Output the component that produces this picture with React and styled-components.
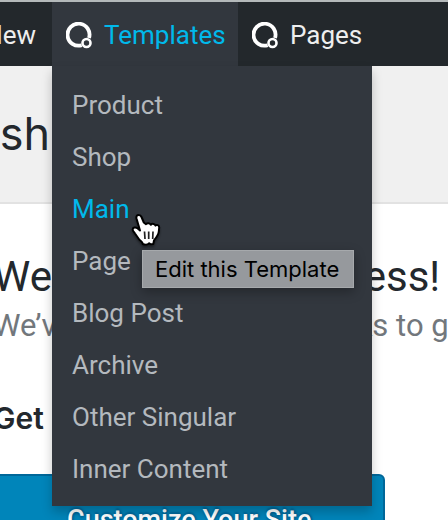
import React from "react";
import styled, { createGlobalStyle, css } from "styled-components";

const GlobalStyle = createGlobalStyle`
  *, *::before, *::after { box-sizing: border-box; }
  body {
    margin: 0;
    background: #fff;
    color: #23282d;
    font-family: Roboto, "Liberation Sans", sans-serif;
    overflow: hidden;
  }
  h1, h2, h3, p, ul { margin: 0; padding: 0; }
  ul { list-style: none; }
`;

const Page = styled.div`
  height: 100vh;
  overflow: hidden;
`;

const AdminBar = styled.nav`
  position: relative;
  z-index: 2;
  display: flex;
  height: 66px;
  border-top: 2px solid #b4b9ba;
  background: #23282c;
`;

const BarItem = styled.div`
  position: relative;
  display: flex;
  flex: none;
  width: ${({ $clipped }) => ($clipped ? "52px" : "186px")};
  justify-content: ${({ $clipped }) => ($clipped ? "flex-end" : "flex-start")};
  background: ${({ $open }) => ($open ? "#32373e" : "transparent")};
`;

const BarLink = styled.a`
  display: flex;
  align-items: center;
  gap: 12px;
  padding: 2px 16px 0 14px;
  color: ${({ $open }) => ($open ? "#00b9eb" : "#eee")};
  font-size: 26px;
  line-height: 32px;
  text-decoration: none;
  white-space: nowrap;
`;

const Menu = styled.ul`
  position: absolute;
  top: 100%;
  left: 0;
  width: 320px;
  padding: 13px 0 11px;
  background: #32373e;
  box-shadow: 0 6px 10px rgba(0, 0, 0, 0.22);
`;

const MenuItem = styled.li`
  position: relative;
`;

const MenuLink = styled.a`
  display: block;
  padding: 0 20px;
  color: ${({ $active }) => ($active ? "#00b9eb" : "#b4b9be")};
  font-size: 26px;
  line-height: 52px;
  text-decoration: none;
  white-space: nowrap;
`;

const overMenu = css`
  position: absolute;
  z-index: 1;
  pointer-events: none;
`;

const Tooltip = styled.span`
  ${overMenu}
  top: 67px;
  left: 90px;
  padding: 0 14px 0 12px;
  border: 1px solid #a6a9ac;
  background: #96999d;
  box-shadow: 0 4px 12px rgba(0, 0, 0, 0.3);
  color: #000;
  font-family: Inter, "Liberation Sans", sans-serif;
  font-size: 22px;
  line-height: 36px;
  white-space: nowrap;
`;

const Pointer = styled.svg`
  ${overMenu}
  top: 30px;
  left: 78px;
  filter: drop-shadow(0 2px 1px rgba(0, 0, 0, 0.4));
`;

const ScreenHeader = styled.header`
  height: 138px;
  padding: 42px 0;
  border-bottom: 2px solid #e2e2e2;
  background: #f0f0f0;
`;

const ScreenTitle = styled.h1`
  margin-left: -58px;
  font-family: Inter, "Liberation Sans", sans-serif;
  font-size: 45px;
  font-weight: 400;
  line-height: 52px;
`;

const Welcome = styled.main`
  margin-left: -7px;
  padding-top: 48px;
  white-space: nowrap;
`;

const WelcomeTitle = styled.h2`
  font-size: 42px;
  font-weight: 400;
  line-height: 50px;
`;

const Intro = styled.p`
  color: #72777c;
  font-size: 31px;
  line-height: 48px;
`;

const SectionTitle = styled.h3`
  margin-top: 48px;
  font-family: Inter, "Liberation Sans", sans-serif;
  font-size: 30px;
  font-weight: 600;
  line-height: 40px;
`;

const CustomizeButton = styled.button`
  display: block;
  height: 92px;
  margin-top: 36px;
  padding: 0 72px;
  border: 2px solid #006799;
  border-radius: 6px;
  background: #0085ba;
  color: #fff;
  font: 500 27px/32px Roboto, "Liberation Sans", sans-serif;
  text-shadow: 0 -2px 2px #006799, 2px 0 2px #006799, 0 2px 2px #006799;
  white-space: nowrap;
`;

const QLogo = () => (
  <svg width="26" height="27" viewBox="0 0 26 27" fill="none" aria-hidden="true">
    <path
      d="M15.7 23.2A11 11 0 1 1 23 16"
      stroke="#fff"
      strokeWidth="3.8"
    />
    <circle cx="20.5" cy="21" r="4" stroke="#fff" strokeWidth="2.6" />
  </svg>
);

const HandPointer = () => (
  <Pointer width="34" height="34" viewBox="0 0 34 34" aria-hidden="true">
    <path
      d="M8.6 2C6.8 2 6 3.5 6.5 5.5L10 17.5L7.5 15.3C5.5 13.6 2.5 14.5 2.7 16.8C2.8 18.2 4 19 5 20.5L9 26.2C10 27.6 12.3 28.5 12.8 31C15 32 18 31.5 19.2 30.2L20.6 31.3L23.3 31L24 27.5C26 25 28.5 22 28.8 18.5L29.2 14.5C29.3 12 26.5 11.3 25.4 12.6C25 10.8 22 10.2 20.8 11.8C20 10 17.2 9.8 16 11.2L13.8 9.5L11.5 4C11 2.8 10 2 8.6 2Z"
      fill="#fff"
      stroke="#000"
      strokeWidth="2"
      strokeLinejoin="round"
    />
    <path d="M14.5 18.5L15 26M18.7 18.5V26M23 18.5L22.7 26" stroke="#222" strokeWidth="1.7" />
  </Pointer>
);

const templates = [
  "Product",
  "Shop",
  "Main",
  "Page",
  "Blog Post",
  "Archive",
  "Other Singular",
  "Inner Content",
];

const TemplateMenu = () => (
  <Menu>
    {templates.map((name) => {
      const active = name === "Main";
      return (
        <MenuItem key={name}>
          <MenuLink
            href="#"
            $active={active}
            aria-describedby={active ? "edit-tip" : undefined}
          >
            {name}
          </MenuLink>
          {active && (
            <>
              <Tooltip role="tooltip" id="edit-tip">Edit this Template</Tooltip>
              <HandPointer />
            </>
          )}
        </MenuItem>
      );
    })}
  </Menu>
);

export default function App() {
  return (
    <>
      <GlobalStyle />
      <Page>
        <AdminBar aria-label="Toolbar">
          <BarItem $clipped>
            <BarLink href="#">New</BarLink>
          </BarItem>
          <BarItem $open>
            <BarLink href="#" $open aria-expanded="true">
              <QLogo />
              Templates
            </BarLink>
            <TemplateMenu />
          </BarItem>
          <BarItem>
            <BarLink href="#">
              <QLogo />
              Pages
            </BarLink>
          </BarItem>
        </AdminBar>
        <ScreenHeader>
          <ScreenTitle>Dashboard</ScreenTitle>
        </ScreenHeader>
        <Welcome>
          <WelcomeTitle>Welcome to WordPress!</WelcomeTitle>
          <Intro>We’ve assembled some links to get you started:</Intro>
          <SectionTitle>Get Started</SectionTitle>
          <CustomizeButton type="button">Customize Your Site</CustomizeButton>
        </Welcome>
      </Page>
    </>
  );
}
